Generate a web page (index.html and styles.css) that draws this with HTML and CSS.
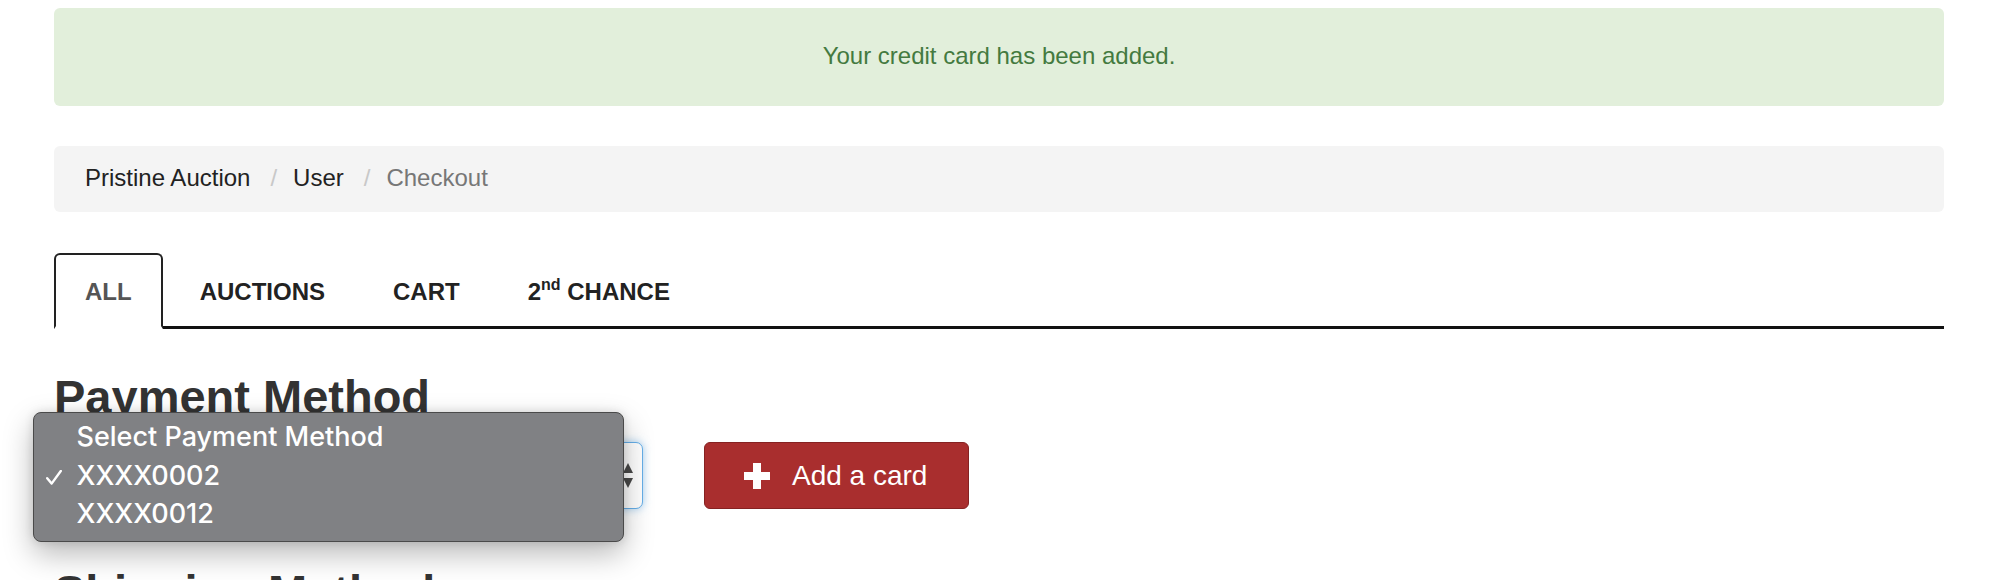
FILE: index.html
```html
<!DOCTYPE html>
<html lang="en">
<head>
<meta charset="utf-8">
<title>Checkout</title>
<link rel="stylesheet" href="styles.css">
</head>
<body>
<div class="page">
  <div class="alert">Your credit card has been added.</div>

  <nav class="crumbs">
    <span class="crumb">Pristine Auction</span>
    <span class="sep">/</span>
    <span class="crumb">User</span>
    <span class="sep">/</span>
    <span class="crumb current">Checkout</span>
  </nav>

  <ul class="tabs">
    <li class="tab active">ALL</li>
    <li class="tab">AUCTIONS</li>
    <li class="tab">CART</li>
    <li class="tab">2<sup class="ord">nd</sup> CHANCE</li>
  </ul>

  <h3 class="heading">Payment Method</h3>

  <div class="pay-row">
    <div class="select-wrap">
      <div class="select">
        <span class="select-value">XXXX0002</span>
        <svg class="select-arrows" width="10" height="25" viewBox="0 0 10 25">
          <polygon points="5,0 10,10 0,10" fill="#4a4a4a"/>
          <polygon points="0,15 10,15 5,25" fill="#4a4a4a"/>
        </svg>
      </div>
      <div class="popup">
        <div class="opt"><span class="check"></span>Select Payment Method</div>
        <div class="opt"><svg class="check" width="16" height="15" viewBox="0 0 16 15"><polyline points="1.2,8.2 5.6,13.6 14.8,1" fill="none" stroke="#fff" stroke-width="2.4" stroke-linecap="round" stroke-linejoin="round"/></svg>XXXX0002</div>
        <div class="opt"><span class="check"></span>XXXX0012</div>
      </div>
    </div>
    <button class="btn-add" type="button">
      <svg class="plus" width="26" height="26" viewBox="0 0 26 26">
        <rect x="0" y="9" width="26" height="8" fill="#fff"/>
        <rect x="9" y="0" width="8" height="26" fill="#fff"/>
      </svg>
      <span>Add a card</span>
    </button>
  </div>

  <h3 class="heading shipping">Shipping Method</h3>
</div>
</body>
</html>
```

FILE: styles.css
```css
html, body {
  margin: 0;
  padding: 0;
  background: #fff;
}

body {
  font-family: "Liberation Sans", Arial, Helvetica, sans-serif;
  font-size: 24px;
  line-height: 34px;
  color: #333;
}

.page {
  margin: 0 54px;
  padding-top: 8px;
}

.alert {
  background: #e2efdb;
  color: #447a40;
  text-align: center;
  padding: 31px 0 33px;
  border-radius: 6px;
  margin-bottom: 40px;
}

.crumbs {
  display: flex;
  align-items: baseline;
  background: #f4f4f4;
  border-radius: 6px;
  padding: 15px 31px 17px;
  margin-bottom: 41px;
  color: #222;
}

.sep {
  color: #c8c8c8;
  margin: 0 16px 0 20px;
}

.crumb.current {
  color: #777;
}

.tabs {
  list-style: none;
  margin: 0;
  padding: 0;
  display: flex;
  border-bottom: 3px solid #111;
}

.tab {
  font-weight: bold;
  color: #222;
  padding: 20px 29px 17px;
  margin-right: 6px;
  margin-bottom: -3px;
  border: 2px solid transparent;
  border-bottom: 3px solid transparent;
  border-radius: 6px 6px 0 0;
}

.tab.active {
  color: #555;
  border-color: #222;
  border-bottom-color: #fff;
  background: #fff;
}

.ord {
  font-size: 16px;
  line-height: 0;
  vertical-align: 10px;
}

.heading {
  font-size: 47px;
  line-height: 51px;
  font-weight: bold;
  color: #333;
  margin: 42px 0 20px;
}

.heading.shipping {
  margin-top: 57px;
}

.pay-row {
  display: flex;
  align-items: center;
}

.select-wrap {
  position: relative;
  width: 589px;
}

.select {
  height: 67px;
  box-sizing: border-box;
  border: 1.5px solid #66afe9;
  border-radius: 7px;
  box-shadow: 0 0 8px rgba(102, 175, 233, 0.6);
  display: flex;
  align-items: center;
  justify-content: space-between;
  padding: 0 9px 0 22px;
  background: #fff;
  color: #555;
}

.popup {
  position: absolute;
  left: -21px;
  top: -30px;
  width: 591px;
  height: 130px;
  box-sizing: border-box;
  background: #808184;
  border: 1px solid #4a4a4a;
  border-radius: 8px;
  box-shadow: 0 12px 30px rgba(0, 0, 0, 0.28), 0 0 10px rgba(0, 0, 0, 0.12);
  padding: 5px 0 9px;
  font-family: Inter, "Liberation Sans", sans-serif;
  font-size: 27px;
  font-weight: 500;
  line-height: 38.7px;
  color: #fff;
}

.opt {
  display: flex;
  align-items: baseline;
}

.check {
  display: inline-block;
  flex: none;
  width: 16px;
  margin-left: 12px;
  margin-right: 14.5px;
}

.btn-add {
  margin-left: 61px;
  height: 67px;
  width: 265px;
  box-sizing: border-box;
  display: flex;
  align-items: center;
  gap: 22px;
  padding: 0 39px;
  background: #a92e2e;
  border: 1.5px solid #862222;
  border-radius: 6px;
  color: #fff;
  font-family: "Liberation Sans", Arial, Helvetica, sans-serif;
  font-size: 28px;
  line-height: 34px;
  white-space: nowrap;
}

.plus {
  flex: none;
}
```
